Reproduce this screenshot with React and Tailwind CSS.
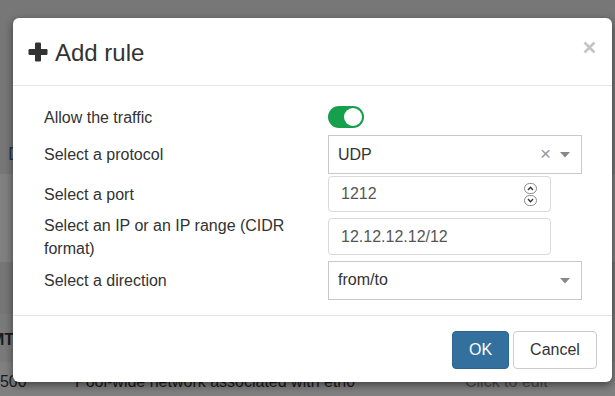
import React from "react";

function PlusIcon() {
  return (
    <svg width="20" height="20" viewBox="0 0 20 20" className="shrink-0">
      <rect x="7" y="0.5" width="6" height="19" rx="1.2" fill="#333" />
      <rect x="0.5" y="7" width="19" height="6" rx="1.2" fill="#333" />
    </svg>
  );
}

function CloseIcon() {
  return (
    <svg width="13" height="13" viewBox="0 0 13 13">
      <path d="M1.5 1.5 L11.5 11.5 M11.5 1.5 L1.5 11.5" stroke="#c4c4c4" strokeWidth="2.6" />
    </svg>
  );
}

function Caret() {
  return (
    <svg width="10" height="6" viewBox="0 0 10 6">
      <path d="M0 0 L10 0 L5 5.5 Z" fill="#888" />
    </svg>
  );
}

function Spinner() {
  return (
    <div className="flex flex-col gap-[1px]">
      <div className="w-[13px] h-[11px] rounded-full border border-[#8a8a8a] flex items-center justify-center">
        <svg width="7" height="5" viewBox="0 0 7 5"><path d="M1 4 L3.5 1.3 L6 4" stroke="#333" strokeWidth="1.3" fill="none" /></svg>
      </div>
      <div className="w-[13px] h-[11px] rounded-full border border-[#8a8a8a] flex items-center justify-center">
        <svg width="7" height="5" viewBox="0 0 7 5"><path d="M1 1 L3.5 3.7 L6 1" stroke="#333" strokeWidth="1.3" fill="none" /></svg>
      </div>
    </div>
  );
}

function Label({ children }) {
  return <div className="w-[268px] shrink-0 text-[16px] leading-[23px] text-[#333]">{children}</div>;
}

export default function App() {
  return (
    <div
      className="relative w-[615px] h-[396px] overflow-hidden bg-[#7a7a7a]"
      style={{ fontFamily: '"Liberation Sans", Arial, sans-serif' }}
    >
      {/* background page under the backdrop */}
      <div className="flex flex-col w-full">
        <div className="h-[174px] bg-[#777] relative">
          <div className="absolute left-[8px] top-[141px] text-[18px] text-[#1f3b57]">D</div>
        </div>
        <div className="h-[88px] bg-[#808080]" />
        <div className="h-[52px] bg-[#767676]" />
        <div className="h-[48px] bg-[#7a7a7a] flex items-center">
          <span className="ml-[-9px] font-bold text-[16px] text-[#1a1a1a] pt-[4px]">MTU</span>
        </div>
        <div className="h-[34px] bg-[#808080] flex items-center text-[16px] text-[#1a1a1a] pt-[6px]">
          <span className="ml-[-9px] w-[84px]">1500</span>
          <span className="w-[390px]">Pool-wide network associated with eth0</span>
          <span className="text-[#4a4a4a]">Click to edit</span>
        </div>
      </div>

      {/* modal */}
      <div className="absolute left-[13px] top-[18px] w-[599px] h-[364px] bg-white rounded-[6px] shadow-[0_3px_9px_rgba(0,0,0,0.5)] flex flex-col">
        <div className="h-[68px] border-b border-[#e5e5e5] flex items-center pl-[15px] pr-[16px]">
          <PlusIcon />
          <span className="ml-[7px] text-[24px] leading-none text-[#333] mt-[2px]">Add rule</span>
          <div className="ml-auto mb-[8px]"><CloseIcon /></div>
        </div>

        <div className="flex flex-col pl-[31px] pt-[20px] pb-[15px] border-b border-[#e5e5e5]">
          <div className="flex items-center h-[22px]">
            <Label>Allow the traffic</Label>
            <div className="ml-[16px] w-[36px] h-[22px] rounded-full bg-[#17a04c] flex items-center justify-end pr-[2px]">
              <div className="w-[18px] h-[18px] rounded-full bg-white" />
            </div>
          </div>

          <div className="flex items-center mt-[7px] h-[39px]">
            <Label>Select a protocol</Label>
            <div className="ml-[16px] w-[254px] h-[39px] border border-[#c8c8c8] flex items-center pl-[9px] pr-[11px] text-[16px] text-[#333]">
              <span>UDP</span>
              <span className="ml-auto text-[19px] leading-none text-[#999] mr-[9px] mb-[2px]">×</span>
              <Caret />
            </div>
          </div>

          <div className="flex items-center mt-[2px] h-[36px]">
            <Label>Select a port</Label>
            <div className="ml-[16px] w-[223px] h-[36px] border border-[#d9d9d9] rounded-[4px] flex items-center pl-[12px] pr-[13px] text-[16px] text-[#555]">
              <span>1212</span>
              <div className="ml-auto"><Spinner /></div>
            </div>
          </div>

          <div className="flex items-center mt-[6px] h-[37px]">
            <Label>Select an IP or an IP range (CIDR format)</Label>
            <div className="ml-[16px] w-[223px] h-[37px] border border-[#d9d9d9] rounded-[4px] flex items-center pl-[12px] text-[16px] text-[#555]">
              <span>12.12.12.12/12</span>
            </div>
          </div>

          <div className="flex items-center mt-[6px] h-[39px]">
            <Label>Select a direction</Label>
            <div className="ml-[16px] w-[254px] h-[39px] border border-[#c8c8c8] flex items-center pl-[9px] pr-[11px] text-[16px] text-[#333]">
              <span className="mb-[2px]">from/to</span>
              <div className="ml-auto"><Caret /></div>
            </div>
          </div>
        </div>

        <div className="flex justify-end items-start pt-[15px] pr-[15px] gap-[4px]">
          <button className="w-[57px] h-[38px] rounded-[4px] bg-[#34709d] border border-[#2e6590] text-white text-[16px]">OK</button>
          <button className="w-[84px] h-[38px] rounded-[4px] bg-white border border-[#cccccc] text-[#333] text-[16px]">Cancel</button>
        </div>
      </div>
    </div>
  );
}
